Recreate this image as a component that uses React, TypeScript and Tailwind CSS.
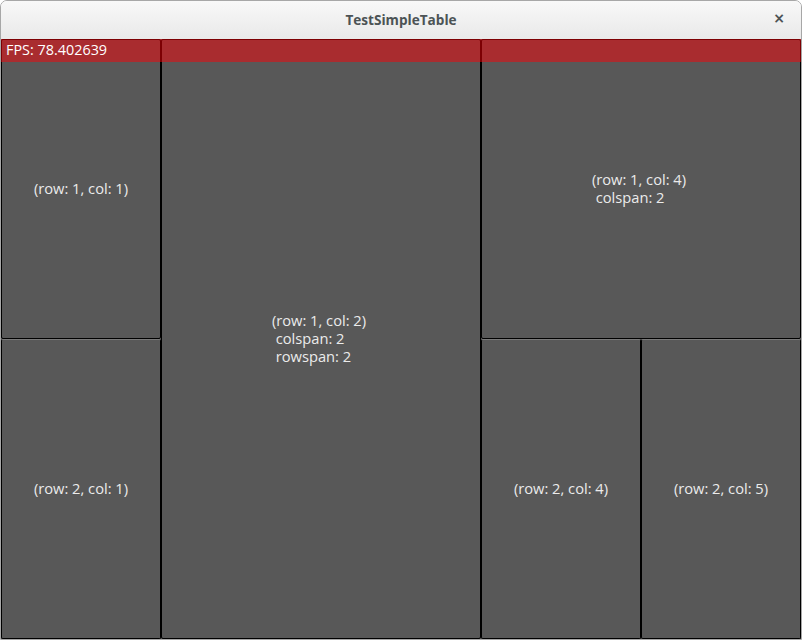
const cells = [
  { key: 'r1c1', text: '(row: 1, col: 1)', cls: 'col-start-1 row-start-1 border-b-black' },
  { key: 'r1c2', text: '(row: 1, col: 2)\n colspan: 2\n rowspan: 2', cls: 'col-start-2 col-span-2 row-start-1 row-span-2 pr-[4px]' },
  { key: 'r1c4', text: '(row: 1, col: 4)\n colspan: 2', cls: 'col-start-4 col-span-2 row-start-1 border-b-black pr-[4px]' },
  { key: 'r2c1', text: '(row: 2, col: 1)', cls: 'col-start-1 row-start-2 border-t-[#7a7a7a]' },
  { key: 'r2c4', text: '(row: 2, col: 4)', cls: 'col-start-4 row-start-2 border-t-[#7a7a7a]' },
  { key: 'r2c5', text: '(row: 2, col: 5)', cls: 'col-start-5 row-start-2 border-t-[#7a7a7a]' },
];

export default function App() {
  return (
    <div className="w-[802px] h-[640px] bg-white overflow-hidden">
      <div className="h-full border border-[#a7a7a7] rounded-t-[7px] overflow-hidden flex flex-col">
        {/* title bar */}
        <div className="h-[38px] shrink-0 bg-gradient-to-b from-[#f8f8f8] to-[#e9e9e9] relative flex items-center justify-center">
          <span className="font-['Open_Sans',sans-serif] font-bold text-[13.6px] text-[#4c5355]">
            TestSimpleTable
          </span>
          <span className="absolute right-[16px] top-[10px] font-['DejaVu_Sans',sans-serif] font-bold text-[14px] leading-none text-[#4c5355]">
            ×
          </span>
        </div>

        {/* table */}
        <div className="relative h-[600px] grid grid-cols-5 grid-rows-2 bg-[#585858] font-['Open_Sans',sans-serif] text-[14.7px] text-[#ebebeb]">
          {cells.map((c) => (
            <div
              key={c.key}
              className={`border border-black rounded-[2px] flex items-center justify-center ${c.cls}`}
            >
              <p className="whitespace-pre text-left leading-[18px] -mt-[2px]">{c.text}</p>
            </div>
          ))}

          {/* fps overlay */}
          <div className="absolute top-0 left-0 right-0 h-[23px] bg-[rgba(250,0,6,0.5)] flex items-center px-[5px]">
            <span className="text-white text-[14.4px] leading-none">FPS: 78.402639</span>
          </div>
        </div>
      </div>
    </div>
  );
}
